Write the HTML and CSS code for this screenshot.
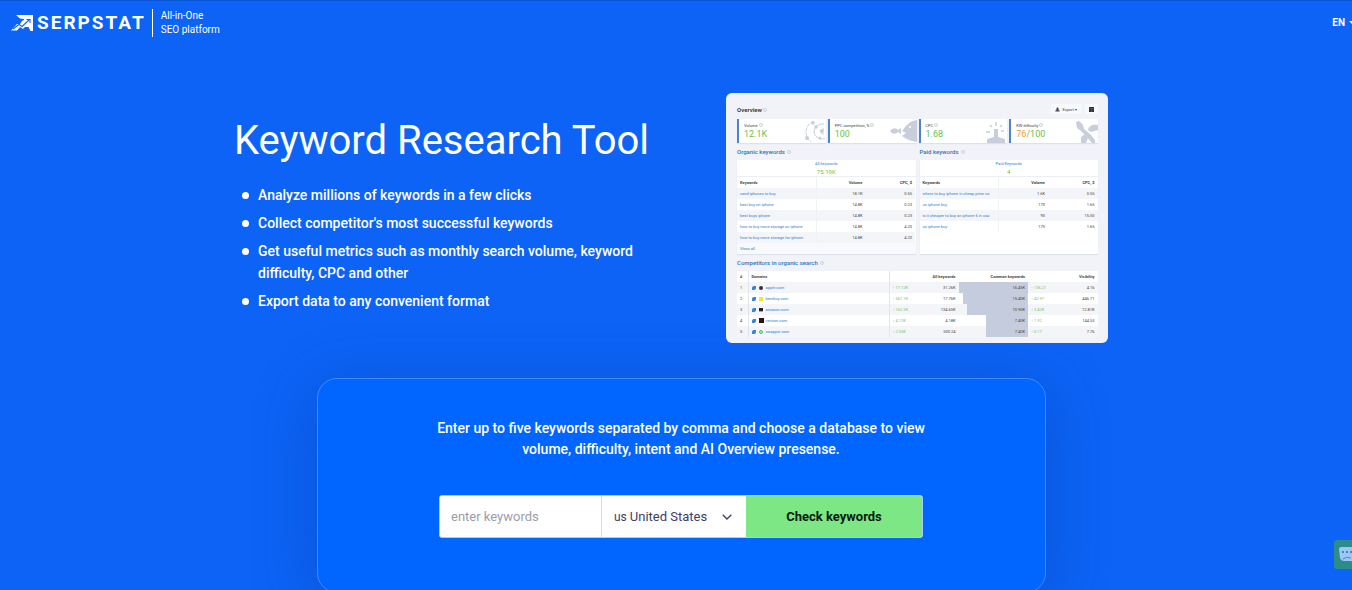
FILE: index.html
```html
<!DOCTYPE html>
<html lang="en">
<head>
    <meta charset="UTF-8">
    <meta name="viewport" content="width=device-width, initial-scale=1.0">
    <title>Keyword Research Tool - Serpstat</title>
    <link rel="stylesheet" href="styles.css">
</head>
<body>

    <!-- Header -->
    <header class="header">
        <a class="logo" href="#">
            <svg class="logo-icon" viewBox="0 0 22 16" aria-hidden="true">
                <path fill="#fff" d="M5 0h17v16h-2.500l-2-4H14l-2 2-3-2-3 3.500H0L6 9h3l2-3 2-1V4L9 3.500z"/>
                <path fill="none" stroke="#0c63f5" stroke-width="1.100" d="M2 14l6-4.500 3 2L18 5M15.500 4.500H19V8"/>
            </svg>
            <span class="logo-name">SERPSTAT</span>
        </a>
        <p class="tagline">All-in-One<br>SEO platform</p>
        <button class="lang" type="button">EN <span class="lang-arrow"></span></button>
    </header>

    <main>
        <!-- Intro -->
        <section class="hero">
            <div class="hero-text">
                <h1>Keyword Research Tool</h1>
                <ul>
                    <li>Analyze millions of keywords in a few clicks</li>
                    <li>Collect competitor's most successful keywords</li>
                    <li>Get useful metrics such as monthly search volume, keyword difficulty, CPC and other</li>
                    <li>Export data to any convenient format</li>
                </ul>
            </div>

            <!-- Report preview -->
            <div class="preview">
                <div class="preview-top">
                    <h2>Overview <i class="info"></i></h2>
                    <button class="preview-btn" type="button">
                        <svg viewBox="0 0 6 6" width="5" height="5" aria-hidden="true"><path d="M3 0l2 3H4v1h1.500v1.500h-5V4H2V3H1z" fill="#444"/></svg>
                        Export ▾
                    </button>
                    <button class="preview-btn preview-grid" type="button" aria-label="Columns">
                        <svg viewBox="0 0 6 6" width="5" height="5" aria-hidden="true"><path d="M0 0h6v6H0z" fill="#333"/><path d="M0 2h6M3 2v4" stroke="#777" stroke-width=".5"/></svg>
                    </button>
                </div>

                <div class="metrics">
                    <div class="metric">
                        <p>Volume <i class="info"></i></p>
                        <strong>12.1K</strong>
                        <svg viewBox="0 0 22 24" aria-hidden="true">
                            <g fill="none" stroke="#c8cedb"><path d="M10 2C0 6 0 18 7 23" stroke-dasharray="4 1"/><path d="M20 5c-9-1-13 9-7 13 3 3 6 2 8 1"/><path d="M20 10c-4 0-5 5 0 5"/></g>
                            <g fill="#c8cedb"><circle cx="9" cy="4" r="1.800"/><circle cx="3" cy="19" r="2"/><circle cx="12" cy="8" r="1.800"/><circle cx="18" cy="12" r="2"/><circle cx="16" cy="19" r="1.500"/></g>
                        </svg>
                    </div>
                    <div class="metric">
                        <p>PPC competition, % <i class="info"></i></p>
                        <strong>100</strong>
                        <svg class="wide" viewBox="0 0 28 24" aria-hidden="true">
                            <path fill="#c8cedb" d="M28 1c-8 1-11 6-15 11l4 2-4 3c4 3 8 5 15 6z"/>
                            <path fill="#c8cedb" d="M1 12c3-4 6-3 8-1l3-2v6l-3-2c-2 2-5 3-8-1z"/>
                            <circle cx="21" cy="8" r="1" fill="#fff"/>
                        </svg>
                    </div>
                    <div class="metric">
                        <p>CPC <i class="info"></i></p>
                        <strong>1.68</strong>
                        <svg viewBox="0 0 22 24" aria-hidden="true">
                            <path fill="#c8cedb" d="M9 10h4v8l7 2v4H2v-4l7-2z"/>
                            <path fill="none" stroke="#c8cedb" stroke-width="1.500" d="M11 3v4M5 6l2 2M17 6l-2 2M1 13h4M16 12h3"/>
                        </svg>
                    </div>
                    <div class="metric">
                        <p>KW difficulty <i class="info"></i></p>
                        <strong><em>76</em>/100</strong>
                        <svg viewBox="0 0 22 24" aria-hidden="true">
                            <path fill="#c8cedb" d="M0 3l3-1 4 4 1 4 6 5 5 6v3h-3l-6-7-5-5-4-3z"/>
                            <path fill="#c8cedb" d="M22 6c-6-1-9 1-10 5l3 2 7-2zM9 15l-4 3v6h5l2-5z"/>
                        </svg>
                    </div>
                </div>

                <div class="panels">
                    <section>
                        <h3>Organic keywords <i class="info"></i></h3>
                        <div class="panel">
                            <div class="total"><a href="#">All keywords</a><b>75.19K</b></div>
                            <table class="keywords">
                                <thead>
                                    <tr><th>Keywords</th><th>Volume</th><th>CPC, $</th></tr>
                                </thead>
                                <tbody>
                                    <tr><td><a href="#">used iphones to buy</a></td><td>18.1K</td><td>0.55</td></tr>
                                    <tr><td><a href="#">best buy on iphone</a></td><td>14.8K</td><td>0.23</td></tr>
                                    <tr><td><a href="#">best buys iphone</a></td><td>14.8K</td><td>0.23</td></tr>
                                    <tr><td><a href="#">how to buy more storage on iphone</a></td><td>14.8K</td><td>4.20</td></tr>
                                    <tr><td><a href="#">how to buy more storage for iphone</a></td><td>14.8K</td><td>4.20</td></tr>
                                </tbody>
                            </table>
                            <a class="show-all" href="#">Show all</a>
                        </div>
                    </section>
                    <section>
                        <h3>Paid keywords <i class="info"></i></h3>
                        <div class="panel">
                            <div class="total"><a href="#">Paid Keywords</a><b>4</b></div>
                            <table class="keywords">
                                <thead>
                                    <tr><th>Keywords</th><th>Volume</th><th>CPC, $</th></tr>
                                </thead>
                                <tbody>
                                    <tr><td><a href="#">where to buy iphone in cheap price us</a></td><td>1.6K</td><td>0.55</td></tr>
                                    <tr><td><a href="#">us iphone buy</a></td><td>170</td><td>1.65</td></tr>
                                    <tr><td><a href="#">is it cheaper to buy an iphone 6 in usa</a></td><td>90</td><td>15.50</td></tr>
                                    <tr><td><a href="#">us iphone buy</a></td><td>170</td><td>1.65</td></tr>
                                </tbody>
                            </table>
                        </div>
                    </section>
                </div>

                <h3>Competitors in organic search <i class="info"></i></h3>
                <table class="competitors">
                    <thead>
                        <tr><th>#</th><th>Domains</th><th>All keywords</th><th>Common keywords</th><th>Visibility</th></tr>
                    </thead>
                    <tbody>
                        <tr>
                            <td>1</td>
                            <td><i class="ext"></i><i class="fav fav-apple"></i><a href="#">apple.com</a></td>
                            <td><span class="up">↑ 17.12K</span>31.26K</td>
                            <td class="bar" style="--bar: 100%">16.45K</td>
                            <td><span class="up">↑ 136.21</span>4.16</td>
                        </tr>
                        <tr>
                            <td>2</td>
                            <td><i class="ext"></i><i class="fav fav-bestbuy"></i><a href="#">bestbuy.com</a></td>
                            <td><span class="up">↑ 561.1K</span>17.76K</td>
                            <td class="bar" style="--bar: 94%">15.40K</td>
                            <td><span class="up">↑ 42.97</span>446.71</td>
                        </tr>
                        <tr>
                            <td>3</td>
                            <td><i class="ext"></i><i class="fav fav-amazon"></i><a href="#">amazon.com</a></td>
                            <td><span class="up">↑ 162.2K</span>134.65K</td>
                            <td class="bar" style="--bar: 89%">10.90K</td>
                            <td><span class="up">↑ 3.42K</span>12.81K</td>
                        </tr>
                        <tr>
                            <td>4</td>
                            <td><i class="ext"></i><i class="fav fav-verizon"></i><a href="#">verizon.com</a></td>
                            <td><span class="up">↑ 4.12K</span>4.18K</td>
                            <td class="bar" style="--bar: 61%">7.40K</td>
                            <td><span class="up">↑ 1.92</span>144.53</td>
                        </tr>
                        <tr>
                            <td>5</td>
                            <td><i class="ext"></i><i class="fav fav-swappie"></i><a href="#">swappie.com</a></td>
                            <td><span class="up">↑ 2.03K</span>500.24</td>
                            <td class="bar" style="--bar: 61%">7.40K</td>
                            <td><span class="up">↑ 0.17</span>7.76</td>
                        </tr>
                    </tbody>
                </table>
            </div>
        </section>

        <!-- Search form -->
        <section class="search-card">
            <p>Enter up to five keywords separated by comma and choose a database to view volume, difficulty, intent and AI Overview presense.</p>
            <form class="search-form">
                <input type="text" aria-label="Keywords" placeholder="enter keywords">
                <div class="database">
                    <label for="database">us</label>
                    <select id="database">
                        <option>United States</option>
                        <option>United Kingdom</option>
                    </select>
                    <svg viewBox="0 0 10 6" width="10" height="6" aria-hidden="true"><path d="M.7.7L5 5 9.300.7" fill="none" stroke="#3d3d63" stroke-width="1.300"/></svg>
                </div>
                <button type="button">Check keywords</button>
            </form>
        </section>
    </main>

    <!-- Chat -->
    <button class="chat" type="button" aria-label="Chat">
        <svg viewBox="0 0 20 16" width="20" height="16" aria-hidden="true">
            <path fill="#9cc6f4" d="M2 0h16q2 0 2 2v9q0 2-2 2h-2v3l-4-2H5q-3 0-4-3L0 2q0-2 2-2z"/>
            <path stroke="#2f6fae" stroke-width="1.500" stroke-dasharray="2 2" d="M3 5h14"/>
            <path fill="none" stroke="#4d88c9" d="M4 12q3-3 8-1"/>
        </svg>
    </button>

</body>
</html>
```

FILE: styles.css
```css
* {
    box-sizing: border-box;
}

html {
    overflow: hidden;
    background-color: #0c63f5;
}

body {
    width: calc(100% + 10px);
    margin: 0;
    font-family: Roboto, Arial, sans-serif;
    color: #fff;
}

h1, h2, h3, p, ul {
    margin: 0;
}

a {
    color: #2f7fd0;
    text-decoration: none;
}

button, input, select {
    font-family: inherit;
    border: none;
}

/* Header */
.header {
    display: flex;
    align-items: center;
    height: 44px;
    padding: 0 5px 0 11px;
    border-top: 1px solid #0a55d3;
}

.logo {
    display: flex;
    align-items: center;
    gap: 4px;
    color: #fff;
}

.logo-icon {
    width: 22px;
    height: 16px;
}

.logo-name {
    font-size: 19px;
    font-weight: 700;
    letter-spacing: 2px;
}

.tagline {
    margin-left: 6px;
    padding-left: 8px;
    border-left: 1px solid #fff;
    font-size: 10px;
    font-weight: 400;
    line-height: 14px;
}

.lang {
    display: flex;
    align-items: center;
    gap: 4px;
    margin-left: auto;
    padding: 0;
    background: none;
    color: #fff;
    font-size: 10px;
    font-weight: 700;
}

.lang-arrow {
    border: 4px solid transparent;
    border-top-color: #fff;
    border-bottom: none;
}

/* Intro */
.hero {
    display: flex;
    justify-content: space-between;
    max-width: 894px;
    margin: 0 auto;
    padding: 49px 20px 35px 0;
}

.hero-text {
    width: 430px;
    padding-top: 24px;
}

h1 {
    font-size: 40px;
    font-weight: 400;
    line-height: 48px;
}

.hero ul {
    margin-top: 19px;
    padding-left: 24px;
    list-style: none;
    font-size: 14px;
    font-weight: 500;
    line-height: 22px;
}

.hero li {
    position: relative;
    margin-bottom: 6px;
}

.hero li::before {
    content: "";
    position: absolute;
    top: 8px;
    left: -16px;
    width: 7px;
    height: 7px;
    border-radius: 50%;
    background-color: #fff;
}

/* Report preview */
.preview {
    width: 382px;
    height: 250px;
    padding: 10px 10px 8px 11px;
    border-radius: 6px;
    background-color: #f1f3f8;
    color: #444;
    font-size: 4px;
    line-height: 5px;
}

.preview-top {
    display: flex;
    align-items: center;
    gap: 4px;
    height: 12px;
    margin-bottom: 4px;
}

.preview h2 {
    margin-right: auto;
    font-size: 6px;
    font-weight: 700;
}

.preview h3 {
    display: flex;
    align-items: center;
    gap: 2px;
    height: 17px;
    color: #2c74bd;
    font-size: 6px;
    font-weight: 500;
}

.info {
    display: inline-block;
    width: 4px;
    height: 4px;
    border: 1px solid #ccd1db;
    border-radius: 50%;
}

.preview-btn {
    display: flex;
    align-items: center;
    gap: 2px;
    height: 10px;
    padding: 0 4px;
    border-radius: 1px;
    background-color: #f8f9fc;
    color: #444;
    font-size: 4px;
}

.metrics {
    display: grid;
    grid-template-columns: repeat(4, 1fr);
    gap: 2px;
}

.metric {
    position: relative;
    height: 24px;
    padding: 4px 0 0 5px;
    border-left: 2px solid #4c86c8;
    background-color: #fff;
    box-shadow: 0 1px 1px #dde1e9;
}

.metric strong {
    display: block;
    color: #6cbf4b;
    font-size: 9px;
    font-weight: 400;
    line-height: 13px;
}

.metric em {
    color: #f29b38;
    font-style: normal;
}

.metric svg {
    position: absolute;
    top: 0;
    right: 0;
    width: 22px;
    height: 24px;
}

.metric svg.wide {
    width: 28px;
}

.panels {
    display: grid;
    grid-template-columns: 1fr 1fr;
    gap: 4px;
}

.panel {
    height: 94px;
    background-color: #fff;
    box-shadow: 0 1px 1px #dde1e9;
}

.total {
    height: 17px;
    padding-top: 1px;
    border-bottom: 1px solid #eceef3;
    text-align: center;
}

.total a, .total b {
    display: block;
    line-height: 6px;
}

.total b {
    color: #6cbf4b;
    font-size: 6px;
    font-weight: 400;
    line-height: 9px;
}

.preview table {
    width: 100%;
    border-collapse: collapse;
    table-layout: fixed;
}

.preview th, .preview td {
    height: 11px;
    padding: 0 3px;
    text-align: right;
    white-space: nowrap;
}

.preview th {
    font-weight: 700;
}

.preview tbody tr:nth-child(odd) {
    background-color: #f4f5f8;
}

.keywords th:first-child, .keywords td:first-child {
    width: 79px;
    border-right: 1px solid #f0f2f6;
    text-align: left;
    overflow: hidden;
}

.show-all {
    display: block;
    padding: 0 3px;
    background-color: #f8f9fc;
    line-height: 11px;
}

.competitors {
    background-color: #fff;
}

.competitors th:nth-child(1) {
    width: 11px;
}

.competitors th:nth-child(2) {
    width: 141px;
}

.competitors th:nth-child(-n+2), .competitors td:nth-child(-n+2) {
    border-right: 1px solid #e2e5ec;
    text-align: left;
}

.up {
    float: left;
    color: #7fc06a;
}

.competitors .bar {
    background: linear-gradient(#c5ccdd, #c5ccdd) right / var(--bar) 100% no-repeat;
}

.ext, .fav {
    display: inline-block;
    width: 4px;
    height: 4px;
    margin-right: 3px;
    background-color: #3c82d4;
    vertical-align: middle;
}

.ext {
    border-radius: 2px 0;
}

.fav-apple {
    border-radius: 50%;
    background-color: #333;
}

.fav-bestbuy {
    background-color: #f5e428;
}

.fav-amazon {
    border-bottom: 1px solid #f29b38;
    background-color: #222;
}

.fav-verizon {
    width: 5px;
    height: 5px;
    margin-right: 2px;
    background-color: #301010;
}

.fav-swappie {
    border: 1px solid #4cb96a;
    border-radius: 50%;
    background-color: #c9eed3;
}

/* Search form */
.search-card {
    display: flex;
    flex-direction: column;
    align-items: center;
    max-width: 729px;
    margin: 0 auto;
    padding: 39px 20px 54px;
    border: 1px solid #3f8bff;
    border-radius: 20px;
    background-color: #0066ff;
    box-shadow: 0 10px 60px rgba(10, 60, 160, 0.4);
}

.search-card p {
    max-width: 520px;
    font-size: 14px;
    font-weight: 500;
    line-height: 21px;
    text-align: center;
}

.search-form {
    display: flex;
    width: 100%;
    max-width: 484px;
    height: 43px;
    margin-top: 35px;
    border: 1px solid #a9ccfa;
    border-radius: 3px;
    background-color: #fff;
    overflow: hidden;
}

.search-form input {
    flex: 1;
    min-width: 0;
    padding: 0 11px;
    font-size: 13px;
    outline: none;
}

.search-form input::placeholder {
    color: #9c9ca9;
}

.database {
    display: flex;
    align-items: center;
    width: 145px;
    padding: 0 14px 0 12px;
    border-left: 1px solid #d9dce4;
    color: #3d3d63;
}

.database label {
    margin-right: 3px;
    font-size: 12px;
}

.database select {
    flex: 1;
    min-width: 0;
    padding: 0;
    appearance: none;
    background: none;
    color: inherit;
    font-size: 13px;
}

.search-form button {
    width: 176px;
    background-color: #7ce784;
    color: #0b1a10;
    font-size: 13px;
    font-weight: 700;
    cursor: pointer;
}

/* Chat */
.chat {
    position: fixed;
    right: -12px;
    bottom: 21px;
    display: flex;
    align-items: center;
    height: 29px;
    padding: 0 5px;
    border-radius: 3px;
    background-color: #2b8c8a;
}
```
